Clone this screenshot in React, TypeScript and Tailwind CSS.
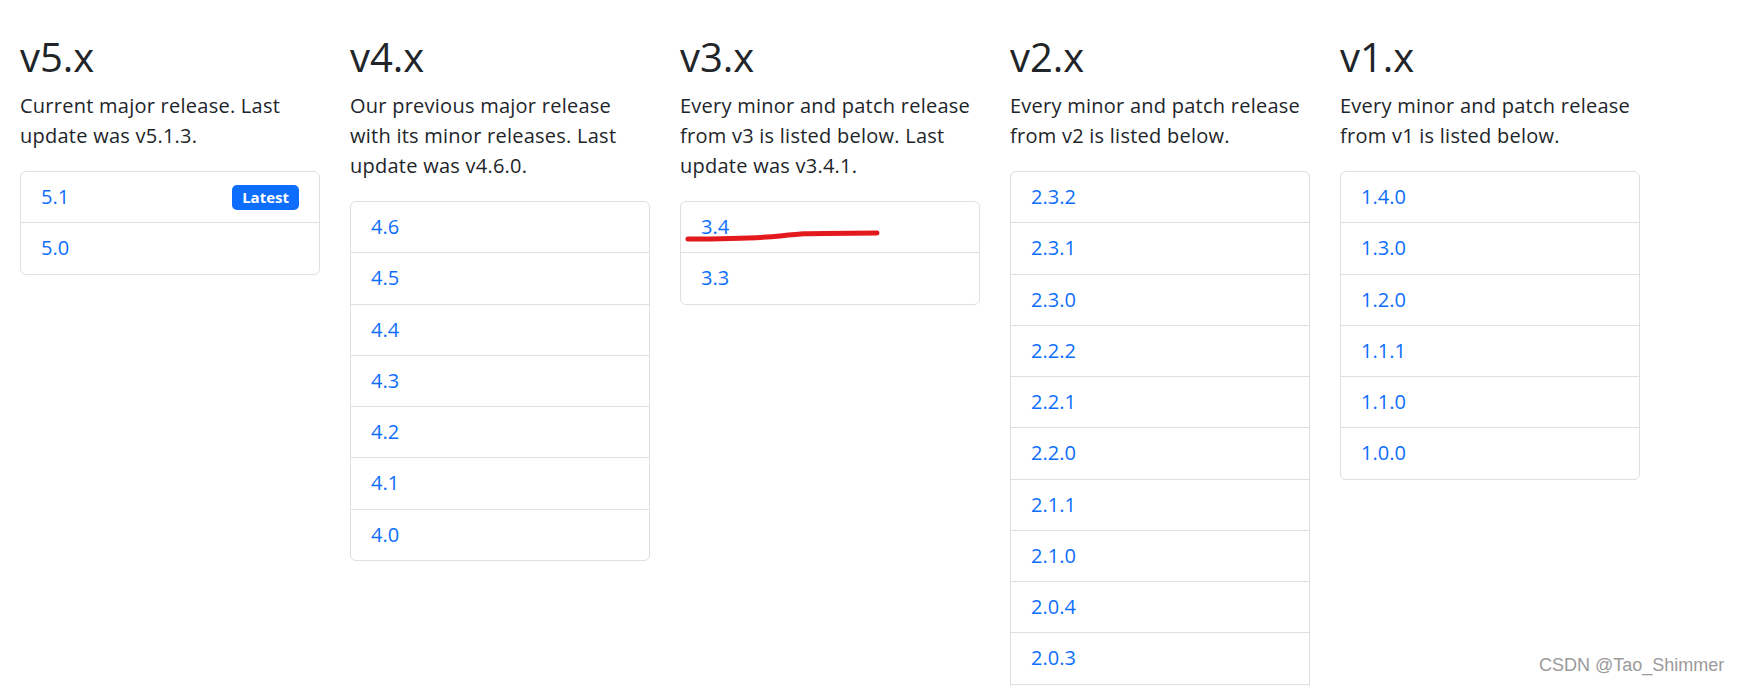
import React from 'react';

type Release = {
  title: string;
  desc: string;
  versions: string[];
  latest?: string;
};

const releases: Release[] = [
  {
    title: 'v5.x',
    desc: 'Current major release. Last update was v5.1.3.',
    versions: ['5.1', '5.0'],
    latest: '5.1',
  },
  {
    title: 'v4.x',
    desc: 'Our previous major release with its minor releases. Last update was v4.6.0.',
    versions: ['4.6', '4.5', '4.4', '4.3', '4.2', '4.1', '4.0'],
  },
  {
    title: 'v3.x',
    desc: 'Every minor and patch release from v3 is listed below. Last update was v3.4.1.',
    versions: ['3.4', '3.3'],
  },
  {
    title: 'v2.x',
    desc: 'Every minor and patch release from v2 is listed below.',
    versions: ['2.3.2', '2.3.1', '2.3.0', '2.2.2', '2.2.1', '2.2.0', '2.1.1', '2.1.0', '2.0.4', '2.0.3', '2.0.2', '2.0.1', '2.0.0'],
  },
  {
    title: 'v1.x',
    desc: 'Every minor and patch release from v1 is listed below.',
    versions: ['1.4.0', '1.3.0', '1.2.0', '1.1.1', '1.1.0', '1.0.0'],
  },
];

const ReleaseColumn: React.FC<{ release: Release }> = ({ release }) => {
  return (
    <div className="w-[300px] shrink-0">
      <h2 className="text-[40px] leading-[48px] font-normal mb-[10px]">{release.title}</h2>
      <p className="text-[20px] leading-[30px] tracking-[0.25px] mb-[20px]">{release.desc}</p>
      <div className="border border-[#dfdfdf] rounded-[6px] bg-white">
        {release.versions.map((v, i) => (
          <a
            key={v}
            href="#"
            className={`flex items-center justify-between px-5 py-[10px] text-[20px] leading-[30.25px] text-[#0d6efd] ${
              i > 0 ? 'border-t border-[#dfdfdf]' : ''
            }`}
          >
            <span>{v}</span>
            {release.latest === v && (
              <span className="bg-[#0d6efd] text-white text-[15px] font-bold leading-none px-[10px] py-[5px] rounded-[5px]">
                Latest
              </span>
            )}
          </a>
        ))}
      </div>
    </div>
  );
};

export default function App() {
  return (
    <div
      className="relative w-full h-[686px] overflow-hidden bg-white text-[#212529]"
      style={{ fontFamily: '"Open Sans", "Noto Sans", sans-serif' }}
    >
      <div className="flex items-start gap-[30px] pl-[20px] pt-[33px]">
        {releases.map((r) => (
          <ReleaseColumn key={r.title} release={r} />
        ))}
      </div>

      {/* hand-drawn red mark under 3.4 */}
      <svg className="absolute left-[685px] top-[228px]" width="198" height="16" viewBox="0 0 198 16" fill="none">
        <path
          d="M3 11 C 40 11, 70 10.5, 95 8 S 120 5.5, 140 5.5 L 192 5"
          stroke="#e3191e"
          strokeWidth="5"
          strokeLinecap="round"
          strokeLinejoin="round"
        />
      </svg>

      <div
        className="absolute left-[1539px] top-[653px] text-[18px] leading-[24px] text-[#9a9a9a] [text-shadow:0_0_2px_#fff]"
        style={{ fontFamily: '"Liberation Sans", Arial, sans-serif' }}
      >
        CSDN @Tao_Shimmer
      </div>
    </div>
  );
}
